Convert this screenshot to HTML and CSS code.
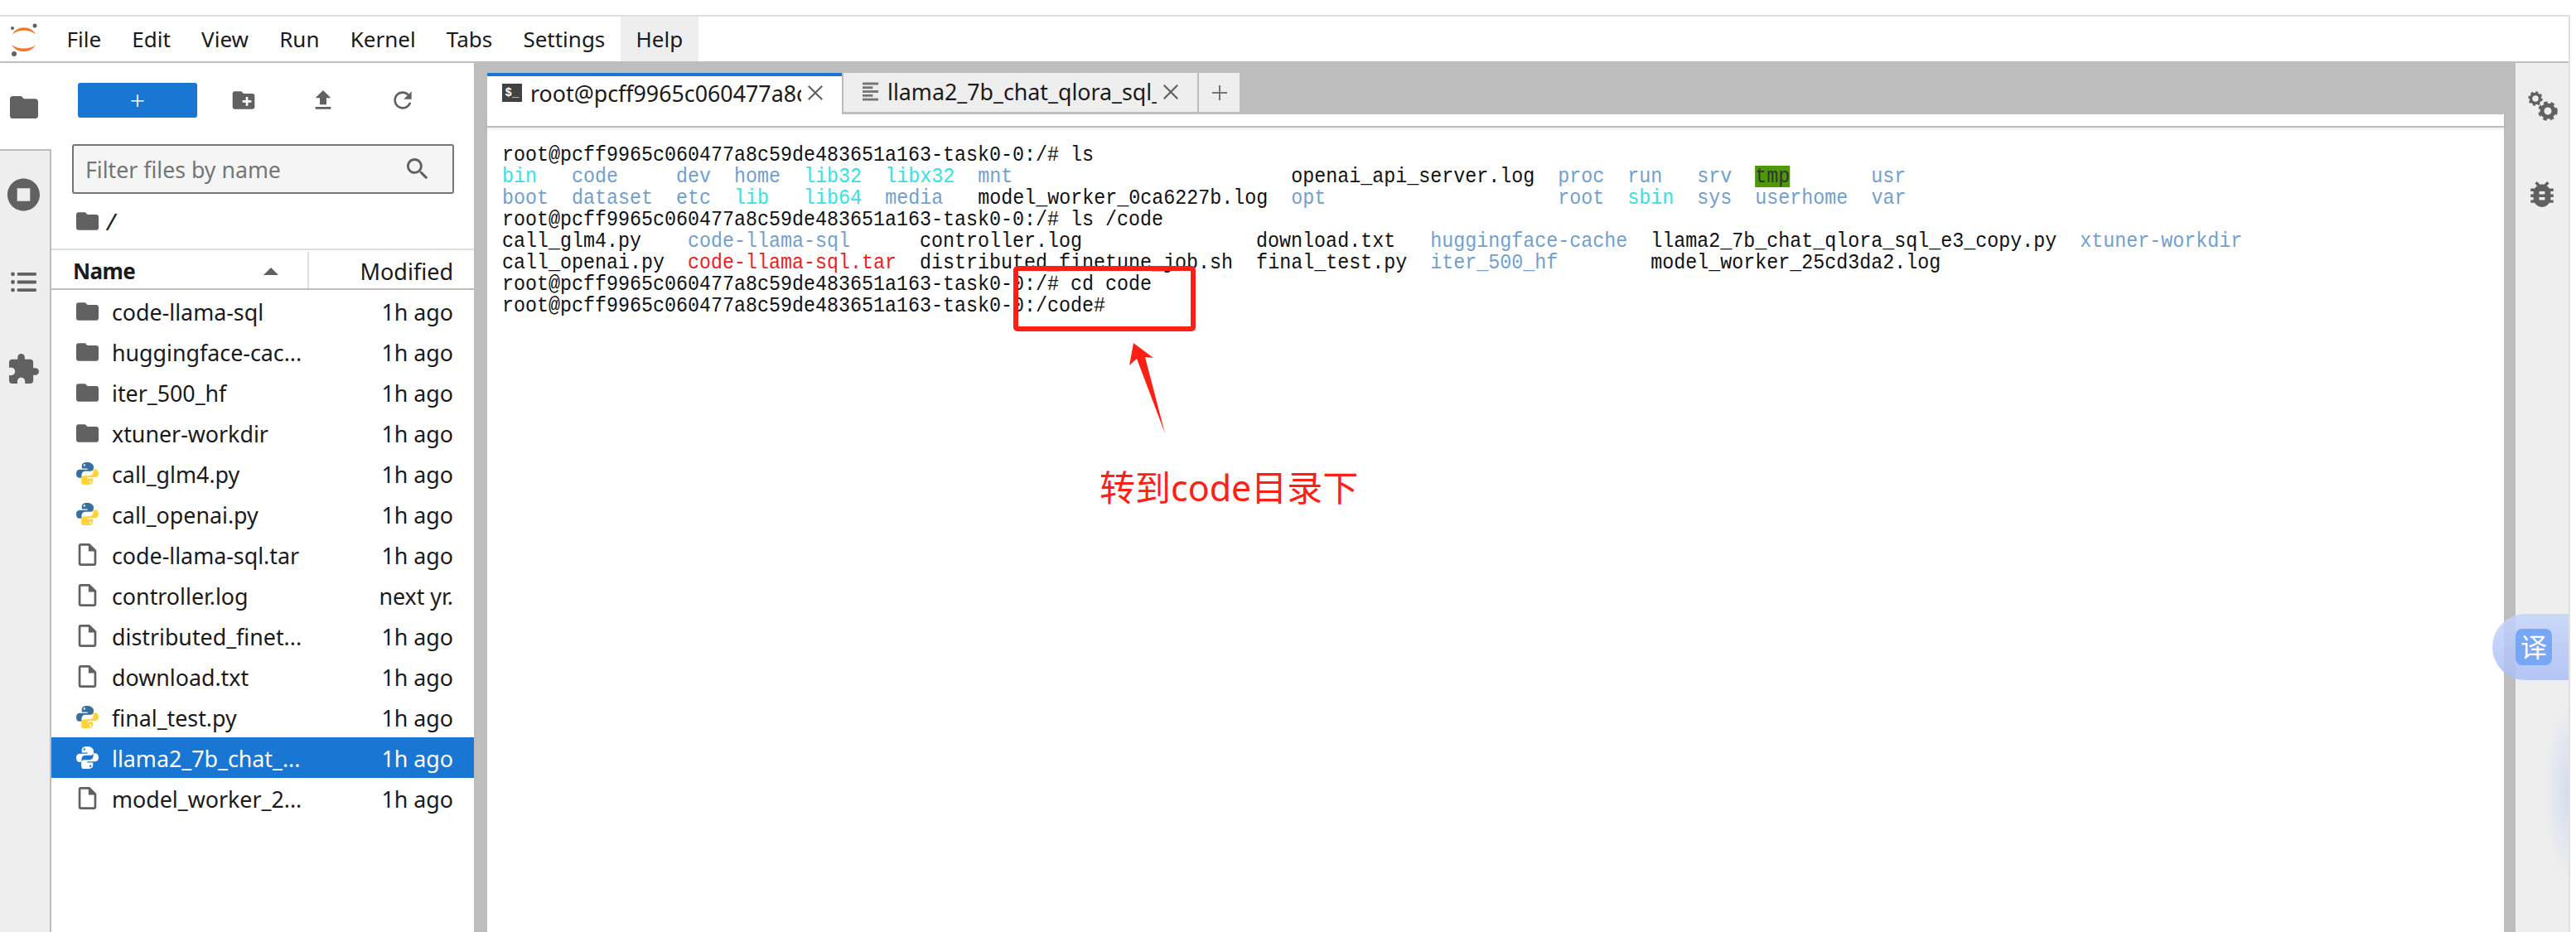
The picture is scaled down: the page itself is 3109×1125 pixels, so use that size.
FILE: index.html
```html
<!DOCTYPE html>
<html lang="en">
<head>
<meta charset="utf-8">
<title>JupyterLab</title>
<link rel="stylesheet" href="styles.css">
</head>
<body>
<svg class="defs" aria-hidden="true">
  <symbol id="i-folder" viewBox="2 4 20 16"><path d="M10 4H4c-1.1 0-2 .9-2 2v12c0 1.1.9 2 2 2h16c1.1 0 2-.9 2-2V8c0-1.1-.9-2-2-2h-8l-2-2z"/></symbol>
  <symbol id="i-file" viewBox="4 2 16 20"><path d="M14 2H6c-1.1 0-2 .9-2 2v16c0 1.1.9 2 2 2h12c1.1 0 2-.9 2-2V8l-6-6zM6 20V4h7v5h5v11H6z"/></symbol>
  <symbol id="i-py" viewBox="2 2 20 20">
    <path class="py-a" fill-rule="evenodd" d="M11.9 2C8.2 2 7 3.4 7 5.2V7.6h5.1v.8H4.9C3 8.4 2 10 2 12.1s1 3.8 2.9 3.8h1.9v-2.6c0-1.8 1.5-3.3 3.3-3.3h4.7c1.5 0 2.7-1.2 2.7-2.7V5.2C16.500 3.400 15 2 11.900 2zM9.300 3.600a.9.900 0 1 1 0 1.800.9.900 0 0 1 0-1.800z"/>
    <path class="py-b" fill-rule="evenodd" d="M12.100 22c3.700 0 4.900-1.400 4.900-3.200v-2.400h-5.100v-.8h7.200c1.900 0 2.900-1.600 2.900-3.700s-1-3.800-2.900-3.800h-1.900v2.600c0 1.800-1.500 3.300-3.300 3.300h-4.700c-1.500 0-2.700 1.200-2.700 2.700v2.900c0 1.800 1.500 3.200 4.600 3.200zm2.600-1.600a.9.900 0 1 1 0-1.800.9.900 0 0 1 0 1.800z"/>
  </symbol>
</svg>

<div class="app">
  <header class="menubar">
    <div class="logo">
      <svg width="36" height="42" viewBox="0 0 36 42">
        <path class="orange" d="M4 15C8 4 27 3 32 15C26 8 10 8 4 15Z"/>
        <path class="orange" d="M3 27C9 38 26 38 32 27C26 33 10 33 3 27Z"/>
        <circle class="dot" cx="31" cy="4" r="2.500"/>
        <circle class="dot" cx="4" cy="7" r="2"/>
        <circle class="dot" cx="6" cy="38" r="3"/>
      </svg>
    </div>
    <nav class="menus">
      <span class="menu">File</span>
      <span class="menu">Edit</span>
      <span class="menu">View</span>
      <span class="menu">Run</span>
      <span class="menu">Kernel</span>
      <span class="menu">Tabs</span>
      <span class="menu">Settings</span>
      <span class="menu menu-open">Help</span>
    </nav>
  </header>

  <main class="workspace">
    <aside class="leftbar">
      <div class="side-tab side-tab-active">
        <svg class="ic-side-folder"><use href="#i-folder"/></svg>
      </div>
      <div class="side-rest">
        <div class="side-tab side-tab-plain">
          <svg class="ic-stop" viewBox="2 2 20 20"><path fill-rule="evenodd" d="M12 2C6.480 2 2 6.480 2 12s4.480 10 10 10 10-4.480 10-10S17.520 2 12 2zm4 14H8V8h8v8z"/></svg>
        </div>
        <div class="side-tab side-tab-plain">
          <svg class="ic-list" viewBox="0 0 32 26"><circle cx="2.500" cy="3" r="2.500"/><circle cx="2.500" cy="13" r="2.500"/><circle cx="2.500" cy="23" r="2.500"/><rect x="8" y="1" width="24" height="4" rx="1"/><rect x="8" y="11" width="24" height="4" rx="1"/><rect x="8" y="21" width="24" height="4" rx="1"/></svg>
        </div>
        <div class="side-tab side-tab-plain">
          <svg class="ic-puzzle" viewBox="2 1 21 21"><path d="M20.500 11H19V7c0-1.100-.9-2-2-2h-4V3.500C13 2.120 11.880 1 10.500 1S8 2.120 8 3.500V5H4c-1.100 0-1.990.9-1.990 2v3.800H3.500c1.490 0 2.700 1.210 2.700 2.700s-1.210 2.700-2.700 2.700H2V20c0 1.100.9 2 2 2h3.800v-1.500c0-1.490 1.210-2.700 2.700-2.700 1.490 0 2.700 1.210 2.700 2.700V22H17c1.100 0 2-.9 2-2v-4h1.500c1.380 0 2.500-1.120 2.500-2.500S21.880 11 20.500 11z"/></svg>
        </div>
      </div>
    </aside>

    <section class="files">
      <div class="toolbar">
        <button class="new-btn" type="button">+</button>
        <div class="tool"><svg class="ic-tool" viewBox="0 0 24 24"><path d="M20 6h-8l-2-2H4c-1.110 0-1.990.89-1.990 2L2 18c0 1.110.89 2 2 2h16c1.110 0 2-.89 2-2V8c0-1.110-.89-2-2-2zm-1 8h-3v3h-2v-3h-3v-2h3V9h2v3h3v2z"/></svg></div>
        <div class="tool"><svg class="ic-tool" viewBox="0 0 24 24"><path d="M9 16h6v-6h4l-7-7-7 7h4zm-4 2h14v2H5z"/></svg></div>
        <div class="tool"><svg class="ic-tool" viewBox="0 0 24 24"><path d="M17.650 6.350C16.200 4.900 14.210 4 12 4c-4.420 0-7.990 3.580-7.990 8s3.570 8 7.990 8c3.730 0 6.840-2.550 7.730-6h-2.080c-.82 2.330-3.040 4-5.650 4-3.310 0-6-2.690-6-6s2.690-6 6-6c1.660 0 3.140.69 4.220 1.780L13 11h7V4l-2.350 2.350z"/></svg></div>
      </div>
      <div class="filter">
        <span class="filter-text">Filter files by name</span>
        <svg class="ic-search" viewBox="3 3 18 18"><path d="M15.500 14h-.79l-.28-.27C15.410 12.590 16 11.110 16 9.500 16 5.910 13.090 3 9.500 3S3 5.910 3 9.500 5.910 16 9.500 16c1.610 0 3.090-.59 4.230-1.570l.27.28v.79l5 4.990L20.490 19l-4.990-5zm-6 0C7.010 14 5 11.990 5 9.500S7.010 5 9.500 5 14 7.010 14 9.500 11.990 14 9.500 14z"/></svg>
      </div>
      <div class="crumbs"><svg class="ic-row"><use href="#i-folder"/></svg><span class="crumb-sep">/</span></div>
      <div class="head">
        <div class="head-name"><span>Name</span><i class="caret"></i></div>
        <div class="head-mod">Modified</div>
      </div>
      <ul class="list">
        <li class="row"><svg class="ic-row"><use href="#i-folder"/></svg><span class="name">code-llama-sql</span><span class="time">1h ago</span></li>
        <li class="row"><svg class="ic-row"><use href="#i-folder"/></svg><span class="name">huggingface-cac...</span><span class="time">1h ago</span></li>
        <li class="row"><svg class="ic-row"><use href="#i-folder"/></svg><span class="name">iter_500_hf</span><span class="time">1h ago</span></li>
        <li class="row"><svg class="ic-row"><use href="#i-folder"/></svg><span class="name">xtuner-workdir</span><span class="time">1h ago</span></li>
        <li class="row"><svg class="ic-py"><use href="#i-py"/></svg><span class="name">call_glm4.py</span><span class="time">1h ago</span></li>
        <li class="row"><svg class="ic-py"><use href="#i-py"/></svg><span class="name">call_openai.py</span><span class="time">1h ago</span></li>
        <li class="row"><svg class="ic-doc"><use href="#i-file"/></svg><span class="name">code-llama-sql.tar</span><span class="time">1h ago</span></li>
        <li class="row"><svg class="ic-doc"><use href="#i-file"/></svg><span class="name">controller.log</span><span class="time">next yr.</span></li>
        <li class="row"><svg class="ic-doc"><use href="#i-file"/></svg><span class="name">distributed_finet...</span><span class="time">1h ago</span></li>
        <li class="row"><svg class="ic-doc"><use href="#i-file"/></svg><span class="name">download.txt</span><span class="time">1h ago</span></li>
        <li class="row"><svg class="ic-py"><use href="#i-py"/></svg><span class="name">final_test.py</span><span class="time">1h ago</span></li>
        <li class="row row-sel"><svg class="ic-py"><use href="#i-py"/></svg><span class="name">llama2_7b_chat_...</span><span class="time">1h ago</span></li>
        <li class="row"><svg class="ic-doc"><use href="#i-file"/></svg><span class="name">model_worker_2...</span><span class="time">1h ago</span></li>
      </ul>
    </section>

    <section class="dock">
      <div class="tabs">
        <div class="tab tab-active">
          <span class="term-ic">$_</span>
          <span class="tab-label tab-label-a">root@pcff9965c060477a8c59de483651a163-task0-0:/</span>
          <svg class="ic-x" viewBox="0 0 16 16"><path d="M2 2L14 14M14 2L2 14"/></svg>
        </div>
        <div class="tab tab-idle">
          <svg class="ic-lines" viewBox="0 0 22 24"><rect y="0" width="20" height="3"/><rect y="5" width="13" height="3"/><rect y="10" width="20" height="3"/><rect y="15" width="13" height="3"/><rect y="20" width="20" height="3"/></svg>
          <span class="tab-label tab-label-b">llama2_7b_chat_qlora_sql_e3_copy.py</span>
          <svg class="ic-x" viewBox="0 0 16 16"><path d="M2 2L14 14M14 2L2 14"/></svg>
        </div>
        <div class="tab-add"><svg class="ic-plus" viewBox="0 0 20 20"><path d="M10 1V19M1 10H19"/></svg></div>
      </div>
      <div class="strip"></div>
      <div class="terminal">
<pre class="term">root@pcff9965c060477a8c59de483651a163-task0-0:/# ls
<span class="c">bin</span>   <span class="d">code</span>     <span class="d">dev</span>  <span class="d">home</span>  <span class="c">lib32</span>  <span class="c">libx32</span>  <span class="d">mnt</span>                        openai_api_server.log  <span class="d">proc</span>  <span class="d">run</span>   <span class="d">srv</span>  <span class="tmp">tmp</span>       <span class="d">usr</span>
<span class="d">boot</span>  <span class="d">dataset</span>  <span class="d">etc</span>  <span class="c">lib</span>   <span class="c">lib64</span>  <span class="d">media</span>   model_worker_0ca6227b.log  <span class="d">opt</span>                    <span class="d">root</span>  <span class="c">sbin</span>  <span class="d">sys</span>  <span class="d">userhome</span>  <span class="d">var</span>
root@pcff9965c060477a8c59de483651a163-task0-0:/# ls /code
call_glm4.py    <span class="d">code-llama-sql</span>      controller.log               download.txt   <span class="d">huggingface-cache</span>  llama2_7b_chat_qlora_sql_e3_copy.py  <span class="d">xtuner-workdir</span>
call_openai.py  <span class="r">code-llama-sql.tar</span>  distributed_finetune_job.sh  final_test.py  <span class="d">iter_500_hf</span>        model_worker_25cd3da2.log
root@pcff9965c060477a8c59de483651a163-task0-0:/# cd code
root@pcff9965c060477a8c59de483651a163-task0-0:/code#</pre>
      </div>
    </section>

    <aside class="rightbar">
      <svg class="ic-gears" viewBox="0 0 36 36">
        <g class="gear"><circle cx="9" cy="9" r="5.500" class="gear-ring-s"/><circle cx="9" cy="9" r="7.500" class="gear-teeth-s"/></g>
        <g class="gear"><circle cx="24" cy="24" r="7" class="gear-ring-l"/><circle cx="24" cy="24" r="10" class="gear-teeth-l"/></g>
      </svg>
      <svg class="ic-bug" viewBox="4 3 16 18"><path d="M20 8h-2.810c-.45-.78-1.070-1.450-1.820-1.960L17 4.410 15.590 3l-2.170 2.170C12.960 5.060 12.490 5 12 5c-.49 0-.96.06-1.410.17L8.410 3 7 4.410l1.620 1.630C7.880 6.550 7.260 7.220 6.810 8H4v2h2.090c-.05.33-.09.66-.09 1v1H4v2h2v1c0 .34.04.67.09 1H4v2h2.810c1.040 1.790 2.970 3 5.190 3s4.150-1.210 5.190-3H20v-2h-2.090c.05-.33.09-.66.09-1v-1h2v-2h-2v-1c0-.34-.04-.67-.09-1H20V8zm-6 8h-4v-2h4v2zm0-4h-4v-2h4v2z"/></svg>
    </aside>
  </main>
</div>

<div class="mark-box"></div>
<svg class="mark-arrow" viewBox="0 0 50 112"><polygon points="8,0 32,18 22,17 46,109 12,19 3,27"/></svg>
<div class="mark-text">转到code目录下</div>
<div class="translate"><span class="translate-ic">译</span></div>
<div class="smudge"></div>
</body>
</html>
```

FILE: styles.css
```css
* { box-sizing: border-box; }
html, body { margin: 0; padding: 0; background: #fff; }
body {
  width: 3109px;
  height: 1125px;
  position: relative;
  overflow: hidden;
  padding-top: 18px;
  font-family: "Noto Sans", "Noto Sans CJK SC", sans-serif;
  font-size: 26px;
  color: #1a1a1a;
}
.defs { position: absolute; width: 0; height: 0; }
svg { display: block; fill: #616161; }

.app {
  width: 3102px;
  height: 1107px;
  border-top: 2px solid #e0e0e0;
  border-right: 2px solid #e0e0e0;
  display: flex;
  flex-direction: column;
}

/* menu bar */
.menubar {
  height: 56px;
  flex: none;
  display: flex;
  background: #fff;
  border-bottom: 2px solid #bdbdbd;
}
.logo { width: 62px; padding: 7px 0 0 11px; }
.orange { fill: #f37726; }
.dot { fill: #616161; }
.menus { display: flex; }
.menu {
  display: flex;
  align-items: center;
  padding: 0 18.600px;
}
.menu-open { background: #eee; }

/* workspace */
.workspace {
  flex: 1;
  min-height: 0;
  display: flex;
  background: #bdbdbd;
}
.leftbar {
  width: 62px;
  flex: none;
  display: flex;
  flex-direction: column;
  background: #eee;
  border-right: 2px solid #bdbdbd;
}
.side-tab { display: flex; justify-content: center; align-items: center; width: 60px; }
.side-tab-active { height: 104px; background: #fff; width: 62px; margin-right: -2px; position: relative; }
.side-rest { flex: 1; border-top: 2px solid #bdbdbd; padding-top: 6px; }
.side-tab-plain { height: 98px; }
.ic-side-folder { width: 34px; height: 29px; margin-right: 5px; margin-top: 2px; }
.ic-stop { width: 39px; height: 40px; margin-right: 3px; margin-top: -4px; }
.ic-list { width: 31px; height: 25px; margin-top: 10px; margin-right: 3px; }
.ic-puzzle { width: 36px; height: 36px; margin-right: 3px; margin-top: 24px; }

/* file browser */
.files {
  width: 510px;
  flex: none;
  background: #fff;
  display: flex;
  flex-direction: column;
}
.toolbar {
  display: flex;
  align-items: center;
  padding: 24px 0 0 32px;
  height: 66px;
}
.new-btn {
  width: 144px;
  height: 42px;
  border: 0;
  border-radius: 3px;
  background: #1976d2;
  color: #fff;
  font: 300 32px/42px "Noto Sans", sans-serif;
  padding: 0;
  margin-right: 8px;
}
.tool { width: 96px; display: flex; justify-content: center; }
.ic-tool { width: 32px; height: 32px; }
.filter {
  margin: 32px 0 0 25px;
  width: 461px;
  height: 60px;
  border: 2px solid #757575;
  border-radius: 3px;
  background: #f5f5f5;
  display: flex;
  align-items: center;
  justify-content: space-between;
  padding: 0 29px 0 14px;
  color: #757575;
}
.filter-text { font-size: 26.700px; }
.ic-search { width: 26px; height: 26px; }
.crumbs {
  height: 68px;
  display: flex;
  align-items: center;
  padding-left: 30px;
  gap: 10px;
  border-bottom: 2px solid #e0e0e0;
}
.crumb-sep { font-size: 28px; font-style: italic; }
.head {
  height: 48px;
  display: flex;
  align-items: center;
  padding-top: 2px;
  border-bottom: 2px solid #bdbdbd;
}
.head-name {
  width: 311px;
  height: 44px;
  display: flex;
  align-items: center;
  justify-content: space-between;
  padding: 2px 35px 0 26px;
  border-right: 2px solid #e0e0e0;
  font-weight: 700;
  letter-spacing: -0.6px;
}
.caret {
  width: 0; height: 0;
  border-left: 9px solid transparent;
  border-right: 9px solid transparent;
  border-bottom: 9px solid #616161;
}
.head-mod { flex: 1; text-align: right; padding: 2px 25px 0 0; font-size: 27px; }

.list { list-style: none; margin: 1px 0 0; padding: 0; }
.row {
  height: 49px;
  display: flex;
  align-items: center;
  padding: 0 25px 0 30px;
  font-size: 26.800px;
}
.ic-row { width: 27px; height: 22px; flex: none; }
.ic-py { width: 27px; height: 27px; flex: none; }
.ic-doc { width: 27px; height: 27px; flex: none; }
.name { margin-left: 16px; flex: 1; white-space: nowrap; padding-top: 2px; }
.time { padding-top: 2px; }
.py-a { fill: var(--py-a, #366f9f); }
.py-b { fill: var(--py-b, #ffd43b); }
.row-sel { background: #1976d2; color: #fff; --py-a: #fff; --py-b: #fff; }

/* dock */
.dock {
  width: 2434px;
  flex: none;
  margin: 0 14px 0 16px;
  display: flex;
  flex-direction: column;
}
.tabs { height: 62px; flex: none; display: flex; padding-top: 12px; }
.tab { display: flex; align-items: center; position: relative; overflow: hidden; }
.tab-active {
  width: 428px;
  background: #fff;
  border-top: 4px solid #1976d2;
  padding: 0 0 6px 18px;
}
.tab-idle {
  width: 431px;
  height: 49px;
  background: #eee;
  border: solid #bdbdbd;
  border-width: 0 2px 2px 2px;
  padding: 0 0 2px 23px;
}
.tab-add {
  width: 49px;
  height: 49px;
  background: #eee;
  display: flex;
  align-items: center;
  justify-content: center;
  border-bottom: 2px solid #bdbdbd;
}
.term-ic {
  width: 24px;
  height: 22px;
  background: #424242;
  color: #fff;
  font: 700 14px/22px "Liberation Mono", monospace;
  text-align: center;
  flex: none;
}
.tab-label { white-space: nowrap; overflow: hidden; flex: none; font-size: 26.800px; }
.tab-label-a { width: 327px; margin-left: 10px; }
.tab-label-b { width: 325px; margin-left: 9px; }
.ic-x { width: 22px; height: 22px; margin-left: 6px; flex: none; fill: none; stroke: #616161; stroke-width: 1.600; }
.ic-lines { width: 21px; height: 24px; flex: none; fill: #757575; }
.ic-plus { width: 20px; height: 20px; fill: none; stroke: #757575; stroke-width: 2; }
.strip {
  height: 16px;
  flex: none;
  background: #fff;
  border-bottom: 2px solid #bdbdbd;
  box-shadow: 0 2px 3px rgba(0, 0, 0, .08);
  position: relative;
}
.terminal {
  flex: 1;
  min-height: 0;
  background: #fff;
  padding: 20px 0 0 18px;
  overflow: hidden;
}
.term {
  margin: 0;
  font: 26px/26px "Liberation Mono", monospace;
  color: #111;
  transform: scaleX(.8974);
  transform-origin: 0 0;
  width: 3000px;
}
.d { color: #729fcf; }
.c { color: #34e2e2; }
.r { color: #ef2020; }
.tmp {
  display: inline-block;
  background: #4e9a06;
  color: #2e3436;
  height: 26px;
}

/* right bar */
.rightbar {
  flex: 1;
  background: #eee;
  position: relative;
  padding: 34px 0 0 15px;
}
.ic-gears { width: 36px; height: 36px; }
.ic-bug { width: 28px; height: 31px; margin: 73px 0 0 3px; }
.gear circle { fill: none; stroke: #616161; }
.gear-ring-s { stroke-width: 3.500; }
.gear-teeth-s { stroke-width: 2.500; stroke-dasharray: 3 2.890; }
.gear-ring-l { stroke-width: 5; }
.gear-teeth-l { stroke-width: 3.500; stroke-dasharray: 4.500 3.880; }

/* overlays */
.mark-box {
  position: absolute;
  left: 1223px;
  top: 321px;
  width: 220px;
  height: 79px;
  border: 6px solid #ff2015;
  border-radius: 5px;
}
.mark-arrow {
  position: absolute;
  left: 1360px;
  top: 414px;
  width: 50px;
  height: 112px;
  fill: #ff2015;
}
.mark-text {
  position: absolute;
  left: 1327px;
  top: 560px;
  font-size: 43px;
  line-height: 58px;
  color: #ff2015;
  white-space: nowrap;
}
.translate {
  position: absolute;
  left: 3008px;
  top: 741px;
  width: 92px;
  height: 80px;
  border-radius: 40px 0 0 40px;
  background: linear-gradient(180deg, rgba(196, 212, 250, .85), rgba(170, 190, 245, .85));
}
.translate-ic {
  position: absolute;
  left: 28px;
  top: 18px;
  width: 44px;
  height: 44px;
  border-radius: 8px;
  background: #78a8f5;
  color: #fff;
  font-size: 32px;
  line-height: 44px;
  text-align: center;
}
.smudge {
  position: absolute;
  left: 3070px;
  top: 850px;
  width: 30px;
  height: 210px;
  background: radial-gradient(ellipse at 100% 50%, rgba(190, 205, 240, .55), rgba(190, 205, 240, 0) 70%);
}
```
